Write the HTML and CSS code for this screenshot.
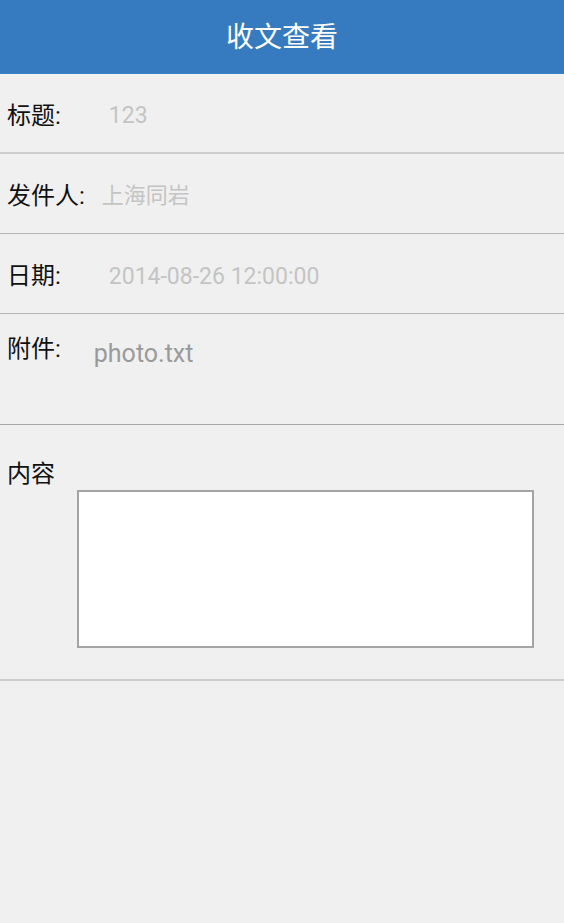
FILE: index.html
```html
<!DOCTYPE html>
<html lang="zh">
<head>
<meta charset="utf-8">
<title>收文查看</title>
<link rel="stylesheet" href="styles.css">
</head>
<body>
<header class="topbar"><h1 class="topbar-title">收文查看</h1></header>
<main class="form">
  <div class="row row-first">
    <span class="label">标题:</span>
    <span class="value v-title">123</span>
  </div>
  <div class="row">
    <span class="label">发件人:</span>
    <span class="value v-sender">上海同岩</span>
  </div>
  <div class="row">
    <span class="label">日期:</span>
    <span class="value v-date">2014-08-26 12:00:00</span>
  </div>
  <div class="row row-attach">
    <span class="label">附件:</span>
    <span class="attach">photo.txt</span>
  </div>
  <div class="row row-content">
    <span class="label">内容</span>
    <div class="content-box"></div>
  </div>
</main>
</body>
</html>
```
FILE: styles.css
```css
html, body {
  margin: 0;
  padding: 0;
  background: #f0f0f0;
  font-family: Roboto, "Noto Sans CJK SC", sans-serif;
}
.topbar {
  height: 74px;
  background: #367bbf;
  display: flex;
  align-items: center;
  justify-content: center;
  padding-top: 3px;
  border-bottom: 1px solid #3a80c4;
  box-sizing: border-box;
}
.topbar-title {
  margin: 0;
  color: #ffffff;
  font-size: 28px;
  font-weight: normal;
  line-height: 1;
}
.form {
  display: flex;
  flex-direction: column;
}
.row {
  height: 80px;
  box-sizing: border-box;
  display: flex;
  align-items: center;
  padding-left: 7px;
  padding-top: 5px;
  border-bottom: 1px solid #b4b4b4;
}
.row-first {
  border-bottom: 2px solid #cdcdcd;
}
.label {
  font-size: 24px;
  color: #111;
  line-height: 1;
  white-space: nowrap;
}
.value {
  color: #c4c4c4;
  font-size: 22px;
  line-height: 1;
}
.v-title { margin-left: 48px; font-size: 23px; }
.v-sender { margin-left: 17px; }
.v-date { margin-left: 48px; font-size: 23px; }
.row-attach {
  height: 111px;
  align-items: flex-start;
  padding-top: 23px;
  border-bottom: 1px solid #a8a8a8;
}
.attach {
  margin-left: 33px;
  margin-top: 4px;
  color: #9a9a9a;
  font-size: 25px;
  line-height: 1;
}
.row-content {
  height: 256px;
  flex-direction: column;
  align-items: flex-start;
  padding-top: 37px;
  border-bottom: 2px solid #cccccc;
}
.content-box {
  margin-top: 4px;
  margin-left: 70px;
  width: 457px;
  height: 158px;
  background: #ffffff;
  border: 2px solid #a4a4a4;
  box-sizing: border-box;
}
```
